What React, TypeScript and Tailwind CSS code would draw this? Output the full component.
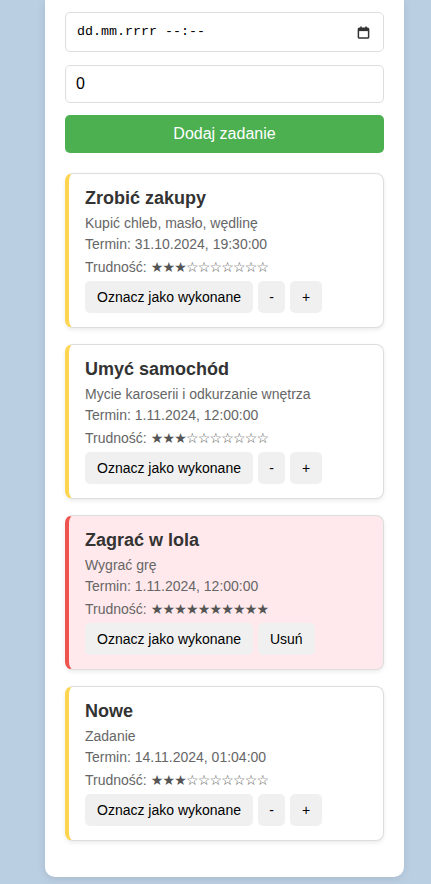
import React from "react";

type Task = {
  id: number;
  title: string;
  description: string;
  due: string;
  difficulty: number;
  overdue: boolean;
};

const tasks: Task[] = [
  {
    id: 1,
    title: "Zrobić zakupy",
    description: "Kupić chleb, masło, wędlinę",
    due: "31.10.2024, 19:30:00",
    difficulty: 3,
    overdue: false,
  },
  {
    id: 2,
    title: "Umyć samochód",
    description: "Mycie karoserii i odkurzanie wnętrza",
    due: "1.11.2024, 12:00:00",
    difficulty: 3,
    overdue: false,
  },
  {
    id: 3,
    title: "Zagrać w lola",
    description: "Wygrać grę",
    due: "1.11.2024, 12:00:00",
    difficulty: 10,
    overdue: true,
  },
  {
    id: 4,
    title: "Nowe",
    description: "Zadanie",
    due: "14.11.2024, 01:04:00",
    difficulty: 3,
    overdue: false,
  },
];

function stars(n: number) {
  return "★".repeat(n) + "☆".repeat(10 - n);
}

function CalendarIcon() {
  return (
    <svg width="13" height="13" viewBox="0 0 14 14" fill="none">
      <rect x="1.5" y="2.5" width="11" height="10.5" rx="1" stroke="#333" strokeWidth="1.6" />
      <rect x="1.5" y="2.5" width="11" height="3" fill="#333" />
      <rect x="3.5" y="0.5" width="1.6" height="3" fill="#333" />
      <rect x="8.9" y="0.5" width="1.6" height="3" fill="#333" />
    </svg>
  );
}

function TaskCard({ task }: { task: Task }) {
  return (
    <div
      className={`mb-4 rounded-[8px] border border-[#dddddd] border-l-4 pl-4 pr-4 pt-[14px] pb-[14px] shadow-[0_2px_4px_rgba(0,0,0,0.08)] ${
        task.overdue
          ? "border-l-[#ef5350] bg-[#ffe9ec]"
          : "border-l-[#ffd54f] bg-white"
      }`}
    >
      <h3 className="h-[21px] text-[18px] font-bold leading-[21px] text-[#333333]">
        {task.title}
      </h3>
      <p className="mt-[6px] text-[14px] leading-4 text-[#666666]">
        {task.description}
      </p>
      <p className="mt-[5px] text-[14px] leading-4 text-[#666666]">
        Termin: {task.due}
      </p>
      <p className="mt-[7px] text-[14px] leading-4 text-[#666666]">
        Trudność:{" "}
        <span className="tracking-[-0.8px] text-[#555555]">{stars(task.difficulty)}</span>
      </p>
      <div className="mt-[6px] flex gap-[5px]">
        <button className="h-8 rounded-[5px] bg-[#f0f0f0] px-3 text-[14px] text-black">
          Oznacz jako wykonane
        </button>
        {task.overdue ? (
          <button className="h-8 rounded-[5px] bg-[#f0f0f0] px-3 text-[14px] text-black">
            Usuń
          </button>
        ) : (
          <>
            <button className="h-8 w-[27px] rounded-[5px] bg-[#f0f0f0] text-[14px] text-black">
              -
            </button>
            <button className="h-8 w-8 rounded-[5px] bg-[#f0f0f0] text-[14px] text-black">
              +
            </button>
          </>
        )}
      </div>
    </div>
  );
}

export default function App() {
  return (
    <div
      className="min-h-[884px] bg-[#bbcfe3] pb-[7px]"
      style={{ fontFamily: '"Liberation Sans", Arial, "DejaVu Sans", sans-serif' }}
    >
      <div className="ml-[45px] w-[359px] rounded-b-[10px] bg-white px-5 pt-3 pb-5 shadow-[0_2px_10px_rgba(0,0,0,0.1)]">
        <div className="flex h-10 items-center justify-between rounded-[5px] border border-[#dddddd] pl-[11px] pr-[13px]">
          <span
            className="text-[13.33px] text-black"
            style={{ fontFamily: '"Liberation Mono", "DejaVu Sans Mono", monospace' }}
          >
            dd.mm.rrrr --:--
          </span>
          <CalendarIcon />
        </div>
        <div className="mt-[13px] flex h-[38px] items-center rounded-[5px] border border-[#dddddd] px-[10px] text-[16px] text-black">
          0
        </div>
        <button className="mt-3 h-[38px] w-full rounded-[5px] bg-[#4caf50] text-[16px] text-white">
          Dodaj zadanie
        </button>
        <div className="mt-5">
          {tasks.map((t) => (
            <TaskCard key={t.id} task={t} />
          ))}
        </div>
      </div>
    </div>
  );
}
